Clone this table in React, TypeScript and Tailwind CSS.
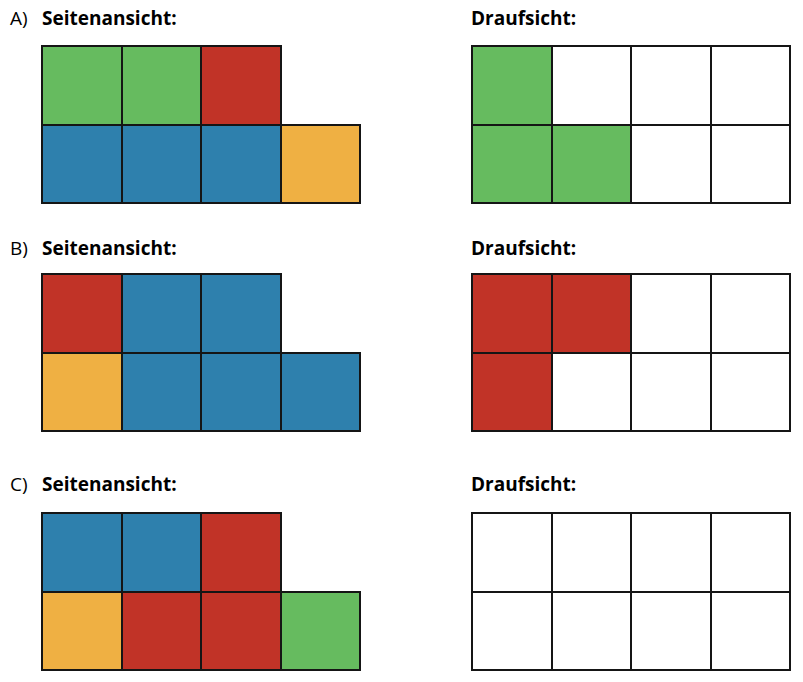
import React from 'react';

type Farbe = 'g' | 'r' | 'b' | 'o' | 'w' | '-';

interface Aufgabe {
  buchstabe: string;
  seite: Farbe[][];
  drauf: Farbe[][];
  abstandOben: string;
  abstandGitter: string;
}

const farbKlassen: Record<Farbe, string> = {
  g: 'bg-[#66bb5f] border-[#151515]',
  r: 'bg-[#c13327] border-[#151515]',
  b: 'bg-[#2e80ad] border-[#151515]',
  o: 'bg-[#efb043] border-[#151515]',
  w: 'bg-white border-[#151515]',
  '-': 'bg-transparent border-transparent',
};

const aufgaben: Aufgabe[] = [
  {
    buchstabe: 'A)',
    seite: [
      ['g', 'g', 'r', '-'],
      ['b', 'b', 'b', 'o'],
    ],
    drauf: [
      ['g', 'w', 'w', 'w'],
      ['g', 'g', 'w', 'w'],
    ],
    abstandOben: 'mt-[5px]',
    abstandGitter: 'mt-[14px]',
  },
  {
    buchstabe: 'B)',
    seite: [
      ['r', 'b', 'b', '-'],
      ['o', 'b', 'b', 'b'],
    ],
    drauf: [
      ['r', 'r', 'w', 'w'],
      ['r', 'w', 'w', 'w'],
    ],
    abstandOben: 'mt-[31px]',
    abstandGitter: 'mt-[12px]',
  },
  {
    buchstabe: 'C)',
    seite: [
      ['b', 'b', 'r', '-'],
      ['o', 'r', 'r', 'g'],
    ],
    drauf: [
      ['w', 'w', 'w', 'w'],
      ['w', 'w', 'w', 'w'],
    ],
    abstandOben: 'mt-[39px]',
    abstandGitter: 'mt-[15px]',
  },
];

function Gitter({ zeilen }: { zeilen: Farbe[][] }) {
  return (
    <div className="flex flex-col">
      {zeilen.map((zeile, i) => (
        <div key={i} className={`flex ${i > 0 ? '-mt-[2px]' : ''}`}>
          {zeile.map((f, j) => (
            <div
              key={j}
              className={`w-[81.5px] h-[80.5px] border-2 ${farbKlassen[f]} ${j > 0 ? '-ml-[2px]' : ''}`}
            />
          ))}
        </div>
      ))}
    </div>
  );
}

export default function App() {
  return (
    <div className="w-[803px] h-[682px] bg-white overflow-hidden pl-[10px] text-black font-['Open_Sans',sans-serif] text-[19px] leading-[26px]">
      {aufgaben.map((a) => (
        <div key={a.buchstabe} className={`flex ${a.abstandOben}`}>
          <div className="w-[461px] shrink-0">
            <div className="flex">
              <span className="w-[32px]">{a.buchstabe}</span>
              <span className="font-bold">Seitenansicht:</span>
            </div>
            <div className={`ml-[31px] ${a.abstandGitter}`}>
              <Gitter zeilen={a.seite} />
            </div>
          </div>
          <div>
            <div className="font-bold">Draufsicht:</div>
            <div className={a.abstandGitter}>
              <Gitter zeilen={a.drauf} />
            </div>
          </div>
        </div>
      ))}
    </div>
  );
}
